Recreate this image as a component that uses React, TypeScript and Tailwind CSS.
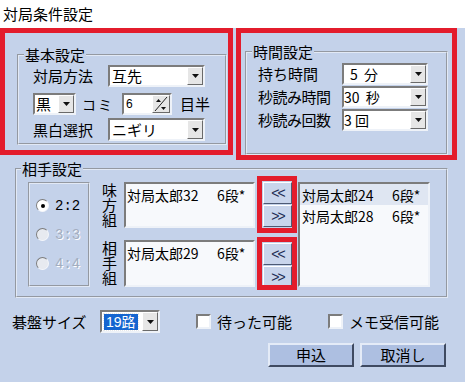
import React from "react";

const jp = "font-['Noto_Sans_CJK_JP',sans-serif]";
const sunken = "border-2 border-t-[#7c7c7c] border-l-[#7c7c7c] border-b-[#eef2f8] border-r-[#eef2f8]";
const raised = "border border-t-white border-l-white border-b-[#6a6a6a] border-r-[#6a6a6a]";

const Arrow = () => (
  <svg width="7" height="4" viewBox="0 0 7 4">
    <polygon points="0,0 7,0 3.5,4" fill="#111" />
  </svg>
);

const DropButton = () => (
  <div className={`w-[16px] flex items-center justify-center bg-[#e6e6e6] ${raised}`}>
    <Arrow />
  </div>
);

const Combo = ({ className, children }: { className: string; children: React.ReactNode }) => (
  <div className={`flex bg-white ${sunken} ${className}`}>
    <div className="flex-1 flex items-center whitespace-pre">{children}</div>
    <DropButton />
  </div>
);

const Group = ({
  title,
  className,
  legendClass,
  children,
}: {
  title: string;
  className: string;
  legendClass: string;
  children: React.ReactNode;
}) => (
  <fieldset className={`border-2 [border-style:groove] border-[#e2e9f5] ${className}`}>
    <legend className={`px-[1px] text-[15px] leading-[16px] ${legendClass}`}>{title}</legend>
    {children}
  </fieldset>
);

const Spinner = () => (
  <div className={`w-[18px] bg-[#e6e6e6] ${raised} flex items-center justify-center`}>
    <svg width="14" height="16" viewBox="0 0 14 16">
      <line x1="1" y1="15" x2="13" y2="1" stroke="#222" strokeWidth="1" />
      <polygon points="2,6 7,6 4.5,3" fill="#111" />
      <polygon points="7,11 12,11 9.5,14" fill="#111" />
    </svg>
  </div>
);

const Radio = ({ label, checked, disabled }: { label: string; checked?: boolean; disabled?: boolean }) => (
  <div className="flex items-center h-[29px]">
    <div
      className={`w-[13px] h-[13px] rounded-full border border-t-[#7c7c7c] border-l-[#7c7c7c] border-b-[#f4f6fa] border-r-[#f4f6fa] flex items-center justify-center ${
        disabled ? "bg-[#e7eaf0]" : "bg-white"
      }`}
    >
      {checked && <div className="w-[4px] h-[4px] rounded-full bg-black" />}
    </div>
    <span
      className={`ml-[6px] text-[14px] leading-[16px] font-['Liberation_Mono',monospace] ${
        disabled ? "text-[#a3adbf] [text-shadow:1px_1px_0_#ffffff]" : "text-black"
      }`}
    >
      {label}
    </span>
  </div>
);

const Entry = ({ name }: { name: string }) => (
  <div className="flex text-[14px] leading-[18px] whitespace-pre">
    <span className="w-[90px]">{name}</span>
    <span>6段*</span>
  </div>
);

const MoveButton = ({ label }: { label: string }) => (
  <div className="h-[22px] w-[29px] flex items-center justify-center bg-[#c9d5ec] border border-t-white border-l-white border-b-[#4d5a74] border-r-[#4d5a74] text-[#1f2d55] text-[14px] leading-none font-['Liberation_Sans',sans-serif] tracking-[-2px]">
    {label}
  </div>
);

const Vertical = ({ text }: { text: string }) => (
  <div className="w-[18px] h-[46px] flex justify-center text-[15px] leading-[18px] [writing-mode:vertical-rl]">
    {text}
  </div>
);

const Check = ({ label }: { label: string }) => (
  <div className="flex items-center">
    <div className={`w-[15px] h-[15px] bg-white ${sunken}`} />
    <span className="ml-[6px] text-[15px] leading-[18px]">{label}</span>
  </div>
);

export default function App() {
  return (
    <div className={`relative w-[465px] h-[382px] overflow-hidden bg-[#c4d2ea] text-black ${jp}`}>
      <div className="h-[28px] bg-white pl-[3px] flex items-center text-[15px] leading-[18px]">対局条件設定</div>

      <div className="flex items-start">
        <Group title="基本設定" className="ml-[17px] mt-[19px] w-[210px] h-[98px]" legendClass="ml-[5px]">
          <div className="flex items-center mt-[2px] pl-[14px]">
            <span className="w-[75px] text-[15px] leading-[18px]">対局方法</span>
            <Combo className="w-[97px] h-[22px]">
              <span className="text-[15px] leading-[16px] pl-[2px]">互先</span>
            </Combo>
          </div>
          <div className="flex items-center mt-[6px] pl-[14px]">
            <Combo className="w-[43px] h-[22px]">
              <span className="text-[15px] leading-[16px] pl-[1px]">黒</span>
            </Combo>
            <span className="ml-[6px] text-[14px] leading-[18px] tracking-[2px]">コミ</span>
            <div className={`ml-[8px] flex h-[22px] w-[50px] bg-white ${sunken}`}>
              <div className="flex-1 pl-[2px] flex items-center text-[12px] leading-[14px] font-['Liberation_Sans',sans-serif]">6</div>
              <Spinner />
            </div>
            <span className="ml-[8px] text-[15px] leading-[18px]">目半</span>
          </div>
          <div className="flex items-center mt-[3px] pl-[14px]">
            <span className="w-[75px] text-[15px] leading-[18px]">黒白選択</span>
            <Combo className="w-[97px] h-[23px]">
              <span className="text-[15px] leading-[16px] pl-[2px]">ニギリ</span>
            </Combo>
          </div>
        </Group>

        <Group title="時間設定" className="ml-[18px] mt-[16px] w-[203px] h-[111px]" legendClass="ml-[5px]">
          <div className="flex flex-col gap-[1px] mt-[3px] pl-[11px]">
            <div className="flex items-center">
              <span className="w-[84px] text-[15px] leading-[18px]">持ち時間</span>
              <Combo className="w-[86px] h-[22px]">
                <span className="text-[14px] leading-[16px] pl-[6px]">5  分</span>
              </Combo>
            </div>
            <div className="flex items-center">
              <span className="w-[84px] text-[15px] leading-[18px] tracking-[-0.5px]">秒読み時間</span>
              <Combo className="w-[86px] h-[22px]">
                <span className="text-[14px] leading-[16px]">30  秒</span>
              </Combo>
            </div>
            <div className="flex items-center">
              <span className="w-[84px] text-[15px] leading-[18px] tracking-[-0.5px]">秒読み回数</span>
              <Combo className="w-[86px] h-[22px]">
                <span className="text-[14px] leading-[16px]">3 回</span>
              </Combo>
            </div>
          </div>
        </Group>
      </div>

      <Group title="相手設定" className="ml-[15px] mt-[6px] w-[433px] h-[137px]" legendClass="ml-[4px]">
        <div className="flex items-start mt-[5px]">
          <div className="ml-[11px] w-[62px] h-[105px] border-2 [border-style:groove] border-[#e2e9f5] pl-[6px] pt-[7px]">
            <Radio label="2:2" checked />
            <Radio label="3:3" disabled />
            <Radio label="4:4" disabled />
          </div>

          <div className="flex flex-col ml-[10px]">
            <div className="flex items-start">
              <Vertical text="味方組" />
              <div className={`ml-[6px] w-[131px] h-[46px] bg-[#f7f9fc] ${sunken} pl-[1px] pt-[2px]`}>
                <Entry name="対局太郎32" />
              </div>
              <div className="ml-[8px] flex flex-col gap-[1px]">
                <MoveButton label="<<" />
                <MoveButton label=">>" />
              </div>
            </div>
            <div className="flex items-start mt-[12px]">
              <Vertical text="相手組" />
              <div className={`ml-[6px] w-[131px] h-[47px] bg-[#f7f9fc] ${sunken} pl-[1px] pt-[2px]`}>
                <Entry name="対局太郎29" />
              </div>
              <div className="ml-[8px] mt-[3px] flex flex-col gap-[1px]">
                <MoveButton label="<<" />
                <MoveButton label=">>" />
              </div>
            </div>
          </div>

          <div className={`ml-[6px] w-[132px] h-[105px] bg-[#f7f9fc] ${sunken}`}>
            <div className="bg-[#dfe6f2] pl-[2px] h-[21px] flex items-center">
              <Entry name="対局太郎24" />
            </div>
            <div className="pl-[2px] h-[21px] flex items-center">
              <Entry name="対局太郎28" />
            </div>
          </div>
        </div>
      </Group>

      <div className="flex items-center mt-[12px] pl-[12px] h-[23px]">
        <span className="w-[75px] text-[15px] leading-[18px]">碁盤サイズ</span>
        <div className={`ml-[13px] flex w-[60px] h-[23px] bg-white ${sunken}`}>
          <div className="flex-1 flex items-center pl-[2px]">
            <span className="bg-[#1565d0] text-white text-[14px] leading-[15px] px-[2px] outline-1 outline-dotted outline-[#e8e8e8] font-['Liberation_Sans',sans-serif]">
              19<span className={jp}>路</span>
            </span>
          </div>
          <DropButton />
        </div>
        <div className="ml-[36px]">
          <Check label="待った可能" />
        </div>
        <div className="ml-[36px]">
          <Check label="メモ受信可能" />
        </div>
      </div>

      <div className="flex justify-end gap-[6px] pr-[19px] mt-[10px]">
        <button className="w-[86px] h-[24px] bg-[#adbfe1] border-2 border-t-[#e4ebf7] border-l-[#e4ebf7] border-b-[#3f4a61] border-r-[#3f4a61] text-[15px] leading-[18px]">
          申込
        </button>
        <button className="w-[86px] h-[24px] bg-[#adbfe1] border-2 border-t-[#e4ebf7] border-l-[#e4ebf7] border-b-[#3f4a61] border-r-[#3f4a61] text-[15px] leading-[18px]">
          取消し
        </button>
      </div>

      {/* annotation frames drawn over the dialog */}
      <div className="absolute left-0 top-[28px] w-[233px] h-[127px] border-[5px] border-[#e31c2c]" />
      <div className="absolute left-[236px] top-[28px] w-[221px] h-[132px] border-[5px] border-[#e31c2c]" />
      <div className="absolute left-[257px] top-[176px] w-[40px] h-[57px] border-[5px] border-[#e31c2c]" />
      <div className="absolute left-[257px] top-[237px] w-[40px] h-[53px] border-[5px] border-[#e31c2c]" />
    </div>
  );
}
